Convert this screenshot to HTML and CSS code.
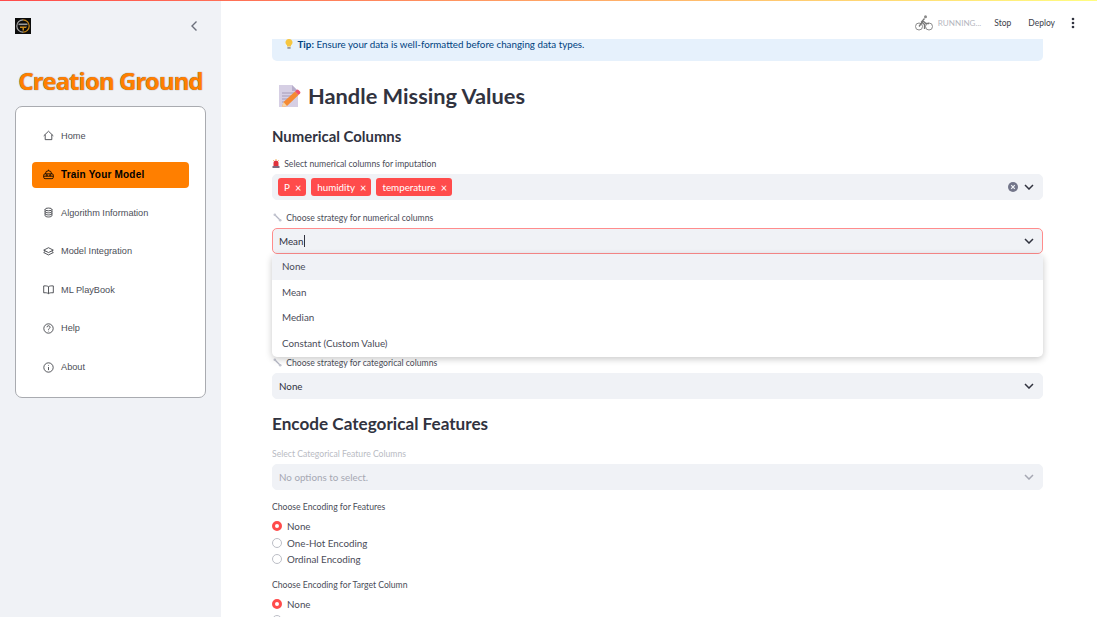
FILE: index.html
```html
<!DOCTYPE html>
<html lang="en">

<head>
    <meta charset="UTF-8">
    <title>Creation Ground</title>
    <link rel="stylesheet" href="styles.css">
</head>

<body>
    <div class="top-line"></div>

    <div class="app">
        <aside class="sidebar">
            <div class="side-top">
                <svg class="logo" width="16" height="16" viewBox="0 0 16 16">
                    <rect width="16" height="16" fill="#0c0c0c" />
                    <path d="M8 1.800a6.200 6.200 0 0 1 0 12.400" fill="none" stroke="#c98a1c" stroke-width="1.200" />
                    <path d="M8 1.800a6.200 6.200 0 0 0 0 12.400" fill="none" stroke="#a5a5a5" stroke-width="1.200" />
                    <rect x="3.500" y="5.500" width="9" height="1.600" fill="#9a9a9a" />
                    <path d="M5 8.500h7l-1 1.600H9v2.400H7.500v-2.400H5z" fill="#c98a1c" />
                </svg>
                <svg class="collapse" width="8" height="12" viewBox="0 0 8 12">
                    <path d="M6.500 1.500 2 6l4.500 4.500" fill="none" stroke="#6b6f7b" stroke-width="1.400" />
                </svg>
            </div>

            <div class="brand">Creation Ground</div>

            <nav class="nav-box">
                <a class="nav-item">
                    <svg class="nav-icon" viewBox="0 0 16 16">
                        <path d="M1 8.500 8 1.800l7 6.700M3.200 6.800V14h9.600V6.800" />
                    </svg>
                    Home
                </a>
                <a class="nav-item active">
                    <svg class="nav-icon" viewBox="0 0 16 16">
                        <rect x="1" y="7" width="14" height="7" rx="2" />
                        <path d="M3.500 7a4.500 4.500 0 0 1 9 0M8 2.500V1M1 10.500h14" />
                        <circle cx="5.500" cy="9" r="1" />
                        <circle cx="10.500" cy="9" r="1" />
                    </svg>
                    Train Your Model
                </a>
                <a class="nav-item">
                    <svg class="nav-icon" viewBox="0 0 16 16">
                        <ellipse cx="8" cy="3.500" rx="5" ry="2" />
                        <path d="M3 3.500v9c0 1.100 2.200 2 5 2s5-.9 5-2v-9M3 6.500c0 1.100 2.200 2 5 2s5-.9 5-2M3 9.500c0 1.100 2.200 2 5 2s5-.9 5-2" />
                    </svg>
                    Algorithm Information
                </a>
                <a class="nav-item">
                    <svg class="nav-icon" viewBox="0 0 16 16">
                        <path d="M8 2.500 15 6 8 9.500 1 6zM3.500 7.500 1 9.500l7 3.500 7-3.500-2.500-2" />
                    </svg>
                    Model Integration
                </a>
                <a class="nav-item">
                    <svg class="nav-icon" viewBox="0 0 16 16">
                        <path d="M8 4C6.500 2.800 4 2.500 1 2.800v10C4 12.500 6.500 12.800 8 14c1.500-1.200 4-1.500 7-1.200v-10C12 2.500 9.500 2.800 8 4zM8 4v10" />
                    </svg>
                    ML PlayBook
                </a>
                <a class="nav-item">
                    <svg class="nav-icon" viewBox="0 0 16 16">
                        <circle cx="8" cy="8" r="6.800" />
                        <path d="M5.800 6.200a2.200 2.200 0 1 1 3.300 1.900C8.400 8.500 8 9 8 9.800M8 11.300v.9" />
                    </svg>
                    Help
                </a>
                <a class="nav-item">
                    <svg class="nav-icon" viewBox="0 0 16 16">
                        <circle cx="8" cy="8" r="6.800" />
                        <path d="M8 7.300v4.500M8 4.300v1" />
                    </svg>
                    About
                </a>
            </nav>
        </aside>

        <main class="main">
            <header class="toolbar">
                <svg class="bike" width="18" height="16" viewBox="0 0 18 16">
                    <circle cx="4" cy="11.500" r="3.500" />
                    <circle cx="14" cy="11.500" r="3.500" />
                    <circle cx="10.500" cy="1.800" r="1.500" class="solid" />
                    <path class="thick" d="M4 11.500 8 6l3 2.500h3M9.500 3.500 6.500 7l3 2.500V14" />
                </svg>
                <span class="running">RUNNING...</span>
                <span class="tool-link stop">Stop</span>
                <span class="tool-link deploy">Deploy</span>
                <svg width="4" height="12" viewBox="0 0 4 12" class="more">
                    <circle cx="2" cy="2" r="1.300" />
                    <circle cx="2" cy="6" r="1.300" />
                    <circle cx="2" cy="10" r="1.300" />
                </svg>
            </header>

            <div class="content">
                <div class="alert">
                    <svg class="mini-icon bulb" width="8" height="10" viewBox="0 0 8 10">
                        <path d="M4 0a3.400 3.400 0 0 0-2 6.200V7.500h4V6.200A3.400 3.400 0 0 0 4 0z" fill="#f7c63f" />
                        <rect x="2.400" y="8" width="3.200" height="1.800" fill="#9a9a9a" />
                    </svg>
                    <b>Tip:</b> Ensure your data is well-formatted before changing data types.
                </div>

                <h1 class="page-title">
                    <svg class="doc-icon" width="24" height="24" viewBox="0 0 24 24">
                        <path d="M2 1h13l6 6v16H2z" fill="#d6cfe4" />
                        <path d="M15 1v6h6z" fill="#b7aecb" />
                        <path d="M5 9h12M5 12h12M5 15h8M5 18h5" stroke="#a59bb8" stroke-width="1.200" />
                        <path d="M5 23l1.500-5L18 7.500l3.500 3.500L10 22z" fill="#f58a33" />
                        <path d="M18 7.500l1.500-1.500a1.500 1.500 0 0 1 2 0l1.500 1.500a1.500 1.500 0 0 1 0 2L21.500 11z" fill="#f0506a" />
                        <path d="M5 23l1.500-5 3.500 4z" fill="#f6d5a8" />
                    </svg>
                    Handle Missing Values
                </h1>

                <h3 class="sub-title">Numerical Columns</h3>

                <label class="field-label">
                    <svg class="mini-icon siren" width="8" height="9" viewBox="0 0 8 9">
                        <path d="M1.500 7V4a2.500 2.500 0 0 1 5 0v3z" fill="#e0323c" />
                        <rect x="0.500" y="7" width="7" height="2" fill="#7d6a80" />
                        <path d="M4 0v1M1 1l.8.8M7 1l-.8.8" stroke="#f2a33a" stroke-width="0.800" />
                    </svg>
                    Select numerical columns for imputation
                </label>
                <div class="select multi">
                    <span class="tag">P <i>×</i></span>
                    <span class="tag">humidity <i>×</i></span>
                    <span class="tag">temperature <i>×</i></span>
                    <svg class="clear" width="10" height="10" viewBox="0 0 10 10">
                        <circle cx="5" cy="5" r="5" fill="#73768a" />
                        <path d="M3.200 3.200 6.800 6.800M6.800 3.200 3.200 6.800" stroke="#f0f2f6" stroke-width="1.200" />
                    </svg>
                    <svg class="chevron" width="10" height="6" viewBox="0 0 10 6">
                        <path d="M1 1l4 4 4-4" />
                    </svg>
                </div>

                <label class="field-label second">
                    <svg class="mini-icon wrench" width="9" height="9" viewBox="0 0 9 9">
                        <path d="M2 2l5 5" stroke="#b4b6c4" stroke-width="1.300" />
                        <circle cx="1.800" cy="1.800" r="1.300" fill="#c3c5d0" />
                        <circle cx="7.200" cy="7.200" r="1.300" fill="#c3c5d0" />
                    </svg>
                    Choose strategy for numerical columns
                </label>
                <div class="select-wrap">
                    <div class="select focused">
                        <span>Mean<span class="caret"></span></span>
                        <svg class="chevron" width="10" height="6" viewBox="0 0 10 6">
                            <path d="M1 1l4 4 4-4" />
                        </svg>
                    </div>
                    <ul class="menu">
                        <li class="current">None</li>
                        <li>Mean</li>
                        <li>Median</li>
                        <li>Constant (Custom Value)</li>
                    </ul>
                </div>

                <label class="field-label third">
                    <svg class="mini-icon wrench" width="9" height="9" viewBox="0 0 9 9">
                        <path d="M2 2l5 5" stroke="#b4b6c4" stroke-width="1.300" />
                        <circle cx="1.800" cy="1.800" r="1.300" fill="#c3c5d0" />
                        <circle cx="7.200" cy="7.200" r="1.300" fill="#c3c5d0" />
                    </svg>
                    Choose strategy for categorical columns
                </label>
                <div class="select">
                    <span>None</span>
                    <svg class="chevron" width="10" height="6" viewBox="0 0 10 6">
                        <path d="M1 1l4 4 4-4" />
                    </svg>
                </div>

                <h2 class="section-title">Encode Categorical Features</h2>

                <label class="field-label disabled">Select Categorical Feature Columns</label>
                <div class="select is-disabled">
                    <span>No options to select.</span>
                    <svg class="chevron" width="10" height="6" viewBox="0 0 10 6">
                        <path d="M1 1l4 4 4-4" />
                    </svg>
                </div>

                <label class="field-label radio-label">Choose Encoding for Features</label>
                <div class="radio on">None</div>
                <div class="radio">One-Hot Encoding</div>
                <div class="radio">Ordinal Encoding</div>

                <label class="field-label radio-label target">Choose Encoding for Target Column</label>
                <div class="radio on">None</div>
                <div class="radio"></div>
            </div>
        </main>
    </div>
</body>

</html>
```

FILE: styles.css
```css
html,
body {
    margin: 0;
    height: 100%;
    overflow: hidden;
}

body {
    font-family: Lato, "Noto Sans", sans-serif;
    color: #31333f;
    position: relative;
}

.top-line {
    position: absolute;
    top: 0;
    left: 0;
    right: 0;
    height: 1px;
    background: linear-gradient(90deg, #ff4b4b, #fffd80);
    z-index: 5;
}

.app {
    display: flex;
    height: 617px;
}

/* Barra lateral */
.sidebar {
    width: 221px;
    flex-shrink: 0;
    box-sizing: border-box;
    background-color: #f0f2f6;
    padding: 18px 15px 0;
}

.side-top {
    display: flex;
    justify-content: space-between;
    align-items: center;
    padding-right: 8px;
}

.brand {
    margin-top: 30px;
    text-align: center;
    font-family: "Noto Sans", sans-serif;
    font-size: 24px;
    line-height: 33px;
    font-weight: 700;
    letter-spacing: -0.900px;
    color: #ff7f00;
    text-shadow: 0 0 1px #555;
    white-space: nowrap;
}

.nav-box {
    margin-top: 9px;
    box-sizing: border-box;
    height: 292px;
    background-color: #fff;
    border: 1px solid #a9abb0;
    border-radius: 7px;
    padding: 15.500px 16px;
    display: flex;
    flex-direction: column;
    gap: 12.600px;
    font-family: "Liberation Sans", Arial, sans-serif;
}

.nav-item {
    height: 26px;
    display: flex;
    align-items: center;
    gap: 7px;
    padding-left: 11px;
    font-size: 9.200px;
    color: #4c4e57;
    border-radius: 4px;
}

.nav-item.active {
    margin: 0.600px 0 -0.600px;
    background-color: #ff7f00;
    color: #000;
    font-weight: 700;
    font-size: 10px;
    letter-spacing: 0.200px;
}

.nav-icon {
    width: 11px;
    height: 11px;
    fill: none;
    stroke: #33353c;
    stroke-width: 1.200;
    flex-shrink: 0;
}

.nav-item.active .nav-icon {
    stroke: #000;
}

/* Area principal */
.main {
    flex: 1;
    min-width: 0;
    display: flex;
    flex-direction: column;
    overflow: hidden;
}

.toolbar {
    height: 39px;
    box-sizing: border-box;
    flex-shrink: 0;
    display: flex;
    align-items: center;
    justify-content: flex-end;
    padding: 7px 22px 0 0;
    font-size: 8.500px;
}

.bike {
    fill: none;
    stroke: #8a8a8a;
    stroke-width: 1;
    margin-right: 5px;
}

.bike .solid {
    fill: #8a8a8a;
    stroke: none;
}

.bike .thick {
    stroke-width: 1.300;
    stroke: #777;
}

.running {
    color: #b5b7c0;
    font-size: 8.100px;
    margin-right: 13px;
}

.tool-link {
    color: #3c3e4a;
}

.stop {
    margin-right: 17px;
}

.deploy {
    margin-right: 16px;
}

.more {
    fill: #31333f;
}

.content {
    padding: 0 54px 0 51px;
}

.alert {
    height: 22px;
    box-sizing: border-box;
    background-color: #e6f1fc;
    border-radius: 0 0 5px 5px;
    padding: 0 13px;
    color: #004280;
    font-size: 9.800px;
    line-height: 8px;
}

.alert b {
    font-weight: 700;
    margin-left: 2px;
}

.mini-icon {
    vertical-align: -1px;
}

.bulb {
    vertical-align: -1.500px;
}

.siren {
    margin-right: 2px;
}

.wrench {
    margin: 0 2px 0 1px;
}

.page-title {
    display: flex;
    align-items: center;
    gap: 7px;
    margin: 17px 0 0 5px;
    height: 35px;
    font-size: 21.800px;
    font-weight: 700;
}

.sub-title {
    margin: 12px 0 0;
    font-size: 14.900px;
    line-height: 22px;
    font-weight: 700;
}

.field-label {
    display: block;
    font-size: 8.650px;
    line-height: 12px;
    color: #4a4c58;
}

.sub-title + .field-label {
    margin-top: 11px;
}

.field-label.second {
    margin-top: 12px;
}

.field-label.third {
    margin-top: 103px;
}

.select {
    margin-top: 4px;
    height: 26px;
    box-sizing: border-box;
    background-color: #f0f2f6;
    border: 1px solid #f0f2f6;
    border-radius: 5px;
    display: flex;
    align-items: center;
    justify-content: space-between;
    padding: 0 8px 0 6px;
    font-size: 9.800px;
    color: #31333f;
}

.select.multi {
    justify-content: flex-start;
    gap: 5px;
    padding-left: 5px;
}

.select.focused {
    border-color: #ff8c8c;
}

.select-wrap {
    position: relative;
}

.chevron {
    fill: none;
    stroke: #31333f;
    stroke-width: 1.500;
    flex-shrink: 0;
}

.clear {
    margin-left: auto;
    margin-right: 1px;
}

.tag {
    height: 18px;
    display: flex;
    align-items: center;
    gap: 5px;
    padding: 0 5px 0 6px;
    background-color: #ff4b4b;
    color: #fff;
    border-radius: 3px;
    font-size: 9.800px;
}

.tag i {
    font-style: normal;
    font-size: 11px;
}

.caret {
    display: inline-block;
    width: 1px;
    height: 12px;
    margin-left: 1px;
    background-color: #31333f;
    vertical-align: -2px;
}

.menu {
    position: absolute;
    top: 26px;
    left: 0;
    right: 0;
    z-index: 3;
    margin: 0;
    padding: 0;
    list-style: none;
    background-color: #fff;
    border-radius: 5px;
    box-shadow: 0 2px 7px rgba(0, 0, 0, 0.220);
    overflow: hidden;
}

.menu li {
    height: 25.700px;
    line-height: 25.700px;
    padding-left: 10px;
    font-size: 9.800px;
    color: #4a4c58;
}

.menu li.current {
    background-color: #f0f2f6;
}

.section-title {
    margin: 13px 0 0;
    font-size: 17.150px;
    line-height: 24px;
    font-weight: 700;
}

.field-label.disabled {
    margin-top: 12px;
    color: #b9bbc3;
}

.select.is-disabled {
    color: #a6a8b3;
}

.is-disabled .chevron {
    stroke: #a6a8b3;
}

.field-label.radio-label {
    margin-top: 11px;
    margin-bottom: 5px;
}

.field-label.target {
    margin-top: 11.500px;
    margin-bottom: 4px;
}

.radio {
    height: 16.600px;
    display: flex;
    align-items: center;
    gap: 5px;
    font-size: 9.800px;
    color: #4a4c58;
}

.radio::before {
    content: "";
    box-sizing: border-box;
    width: 10px;
    height: 10px;
    border-radius: 50%;
    border: 1px solid #bcbec6;
    background-color: #fff;
}

.radio.on::before {
    border: 3px solid #ff4b4b;
}
```
